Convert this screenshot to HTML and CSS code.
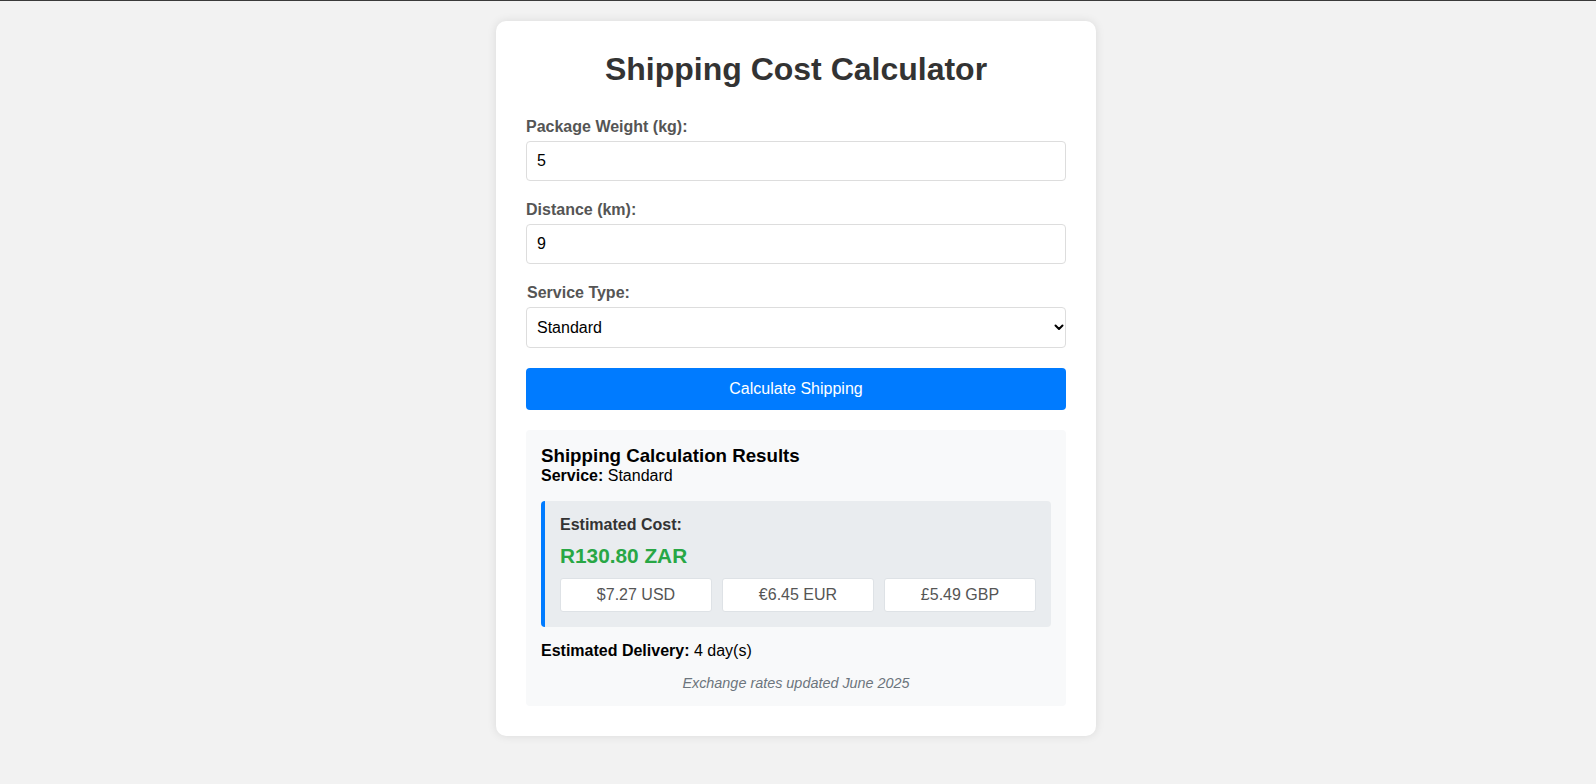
FILE: index.html
```html
<!DOCTYPE html>
<html lang="en">
<head>
<meta charset="utf-8">
<title>Shipping Cost Calculator</title>
<link rel="stylesheet" href="styles.css">
</head>
<body>
<div class="page">
  <div class="card">
    <h1 class="title">Shipping Cost Calculator</h1>
    <div class="group">
      <label class="label" for="weight">Package Weight (kg):</label>
      <input class="field" id="weight" type="number" value="5">
    </div>
    <div class="group">
      <label class="label" for="distance">Distance (km):</label>
      <input class="field" id="distance" type="number" value="9">
    </div>
    <div class="group">
      <label class="label label-service" for="service">Service Type:</label>
      <div class="select-wrap">
        <select class="field select" id="service">
          <option>Standard</option>
          <option>Express</option>
          <option>Overnight</option>
        </select>
        <svg class="chevron" width="10" height="7" viewBox="0 0 10 7" aria-hidden="true"><path d="M1.5 1.5 L5 5 L8.5 1.5" fill="none" stroke="#000" stroke-width="2" stroke-linecap="round" stroke-linejoin="round"/></svg>
      </div>
    </div>
    <button class="btn" type="button">Calculate Shipping</button>
    <div class="results">
      <h3 class="results-title">Shipping Calculation Results</h3>
      <p class="service"><strong>Service:</strong> Standard</p>
      <div class="cost">
        <div class="cost-label">Estimated Cost:</div>
        <div class="cost-amount">R130.80 ZAR</div>
        <div class="currencies">
          <div class="currency">$7.27 USD</div>
          <div class="currency">€6.45 EUR</div>
          <div class="currency">£5.49 GBP</div>
        </div>
      </div>
      <p class="delivery"><strong>Estimated Delivery:</strong> 4 day(s)</p>
      <p class="note">Exchange rates updated June 2025</p>
    </div>
  </div>
</div>
</body>
</html>
```

FILE: styles.css
```css
html, body {
  margin: 0;
  padding: 0;
}
body {
  background: #f2f2f2;
  border-top: 1px solid #3a3a3a;
  font-family: "Liberation Sans", Arial, sans-serif;
  color: #000;
}
.page {
  display: flex;
  justify-content: center;
  padding: 20px 24px 20px 20px;
}
.card {
  width: 600px;
  box-sizing: border-box;
  background: #fff;
  border-radius: 10px;
  padding: 30px;
  box-shadow: 0 0 10px rgba(0, 0, 0, 0.1);
}
.title {
  margin: 0 0 30px;
  text-align: center;
  font-size: 32px;
  font-weight: bold;
  color: #333;
}
.group {
  margin-bottom: 20px;
}
.label {
  display: block;
  margin-bottom: 5px;
  font-size: 16px;
  font-weight: bold;
  color: #555;
}
.label-service {
  padding-left: 1px;
}
.field {
  display: block;
  width: 100%;
  box-sizing: border-box;
  padding: 10px;
  border: 1px solid #ddd;
  border-radius: 4px;
  font-family: "Liberation Sans", Arial, sans-serif;
  font-size: 16px;
  line-height: normal;
  color: #000;
  background: #fff;
  outline: none;
}
.field::-webkit-inner-spin-button,
.field::-webkit-outer-spin-button {
  -webkit-appearance: none;
  margin: 0;
}
.field[type=number] {
  -moz-appearance: textfield;
}
.select-wrap {
  position: relative;
}
.select {
  -webkit-appearance: none;
  appearance: none;
  height: 40.5px;
  padding: 0 10px;
}
.chevron {
  position: absolute;
  right: 2px;
  top: 17px;
}
.btn {
  display: block;
  width: 100%;
  height: 42px;
  padding: 0;
  border: none;
  border-radius: 4px;
  background: #007bff;
  color: #fff;
  font-family: "Liberation Sans", Arial, sans-serif;
  font-size: 16px;
  cursor: pointer;
}
.results {
  margin-top: 20px;
  padding: 15px;
  background: #f8f9fa;
  border-radius: 4px;
}
.results-title {
  margin: 0;
  font-size: 18.72px;
  font-weight: bold;
}
.service {
  margin: 0 0 16px;
  font-size: 16px;
}
.cost {
  padding: 15px;
  background: #e9ecef;
  border-left: 4px solid #007bff;
  border-radius: 4px;
}
.cost-label {
  font-size: 16px;
  font-weight: bold;
  color: #333;
}
.cost-amount {
  margin: 10px 0;
  font-size: 20.8px;
  font-weight: bold;
  color: #28a745;
}
.currencies {
  display: grid;
  grid-template-columns: repeat(3, 1fr);
  gap: 10px;
}
.currency {
  padding: 7px 0;
  background: #fff;
  border: 1px solid #dee2e6;
  border-radius: 3px;
  text-align: center;
  font-size: 16px;
  line-height: normal;
  color: #555;
}
.delivery {
  margin: 15px 0 0;
  font-size: 16px;
}
.note {
  margin: 15px 0 0;
  text-align: center;
  font-size: 14.4px;
  font-style: italic;
  color: #6c757d;
}
```
